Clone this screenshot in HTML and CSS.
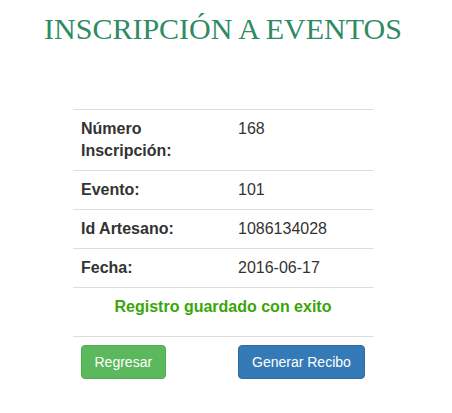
FILE: index.html
```html
<!DOCTYPE html>
<html lang="es">
<head>
<meta charset="utf-8">
<title>Inscripción a eventos</title>
<link rel="stylesheet" href="styles.css">
</head>
<body>
<div class="page">
  <h1 class="title">INSCRIPCIÓN A EVENTOS</h1>
  <table class="info">
    <tbody>
      <tr><th>Número Inscripción:</th><td>168</td></tr>
      <tr><th>Evento:</th><td>101</td></tr>
      <tr><th>Id Artesano:</th><td>1086134028</td></tr>
      <tr><th>Fecha:</th><td>2016-06-17</td></tr>
      <tr><td colspan="2" class="msg-cell"><p class="msg">Registro guardado con exito</p></td></tr>
      <tr>
        <td><button class="btn btn-success" type="button">Regresar</button></td>
        <td><button class="btn btn-primary" type="button">Generar Recibo</button></td>
      </tr>
    </tbody>
  </table>
</div>
</body>
</html>
```
FILE: styles.css
```css
html, body {
  margin: 0;
  padding: 0;
  background: #fff;
}

body {
  font-family: "Liberation Sans", Arial, sans-serif;
  color: #333;
}

.page {
  width: 446px;
  padding-top: 12px;
}

.title {
  margin: 0;
  font-family: "Liberation Serif", "Times New Roman", serif;
  font-weight: normal;
  font-size: 30px;
  line-height: 34px;
  color: #2e8b64;
  text-align: center;
}

.info {
  width: 300px;
  margin: 63px auto 0;
  border-collapse: collapse;
  font-size: 16px;
  line-height: 22px;
}

.info th,
.info td {
  padding: 8px;
  border-top: 1px solid #ddd;
  text-align: left;
  vertical-align: top;
}

.info th {
  width: 141px;
  font-weight: bold;
}

.info .msg-cell {
  text-align: center;
}

.msg {
  margin: 0 0 10px;
  font-weight: bold;
  color: #3aa50a;
}

.btn {
  display: inline-block;
  height: 34px;
  padding: 6px 12.5px;
  font-family: "Liberation Sans", Arial, sans-serif;
  font-size: 14px;
  line-height: 20px;
  color: #fff;
  border: 1px solid transparent;
  border-radius: 4px;
  cursor: pointer;
}

.btn-primary {
  padding: 6px 13px;
}

.btn-success {
  background: #5cb85c;
  border-color: #4cae4c;
}

.btn-primary {
  background: #337ab7;
  border-color: #2e6da4;
}
```
